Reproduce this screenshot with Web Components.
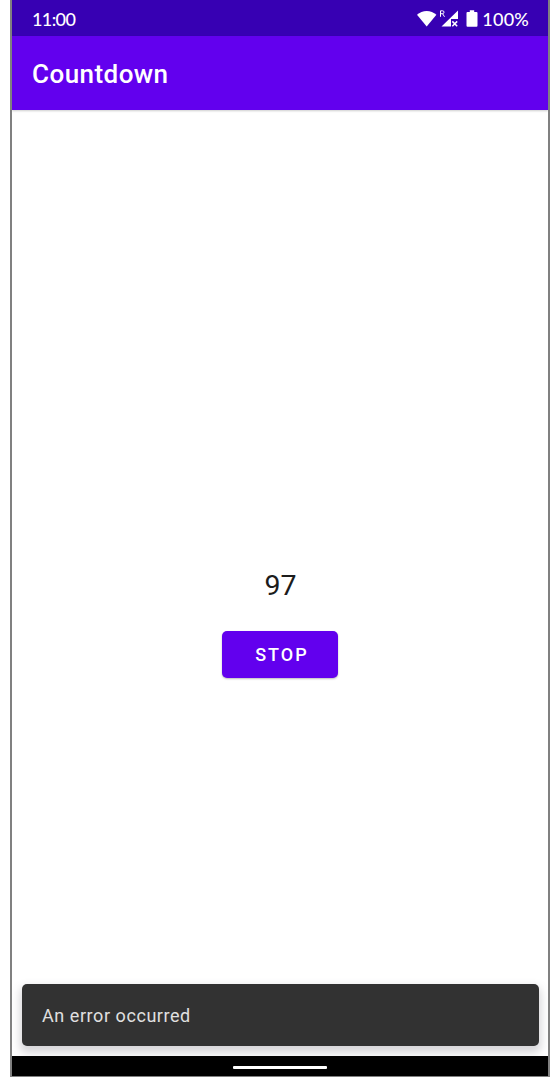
<!DOCTYPE html>
<html lang="en">
<head>
<meta charset="utf-8">
<title>Countdown</title>
<style>
html,body{margin:0;height:100%;background:#fff;overflow:hidden}
</style>
</head>
<body>
<countdown-screen></countdown-screen>
<script>
const define = (name, html) => customElements.define(name, class extends HTMLElement {
  constructor() {
    super();
    const t = document.createElement('template');
    t.innerHTML = html;
    this.attachShadow({ mode: 'open' }).append(t.content.cloneNode(true));
  }
});

define('status-bar', `
<style>
:host{display:flex;box-sizing:border-box;height:36px;padding:1px 19px 0 20px;align-items:center;justify-content:space-between;background:#3700b3;color:#fff;font:500 18px/22px Lato,"Open Sans",sans-serif}
.right{display:flex;align-items:center}
svg{display:block;margin-right:1px}
.time{letter-spacing:-.6px}
.pct{letter-spacing:.2px}
</style>
<span class="time">11:00</span>
<div class="right">
<svg width="64" height="22" viewBox="0 0 64 22" fill="#fff">
<path d="M0 6.8C5.3 1.6 14.1 1.6 19.4 6.8L9.7 18.4Z"/>
<path d="M41 2.5V11H34V18.5H24.5Z"/>
<path d="M35.3 13.4L40.2 18.3M40.2 13.4L35.3 18.3" stroke="#fff" stroke-width="1.5"/>
<path d="M23.5 8.8V2.8H25.6Q27 2.8 27 4.2T25.6 5.7H23.5M25.6 5.7L27.5 8.8" fill="none" stroke="#fff" stroke-width="1"/>
<path d="M52.8 2.2H57.2V4H59.5Q60.5 4 60.5 5V17.6Q60.5 18.8 59.5 18.8H50.5Q49.5 18.8 49.5 17.6V5Q49.5 4 50.5 4H52.8Z"/>
</svg>
<span class="pct">100%</span>
</div>`);

define('app-bar', `
<style>
:host{display:flex;box-sizing:border-box;height:74px;padding:1px 20px 0;align-items:center;background:#6200ee;color:#fff;font:500 26px/30px Roboto,sans-serif;letter-spacing:.45px;box-shadow:0 1px 2px #0003}
</style><slot></slot>`);

define('contained-button', `
<style>
:host{display:block}
button{display:block;width:116px;height:47px;margin:0;padding:1px 0 0 3px;border:0;border-radius:5px;background:#6200ee;color:#fff;font:500 18px/22px Roboto,sans-serif;letter-spacing:2px;box-shadow:0 1px 2px #0004}
</style><button type="button"><slot></slot></button>`);

define('snack-bar', `
<style>
:host{display:flex;box-sizing:border-box;height:62px;margin:0 9px 10px 10px;padding:2px 20px 0;align-items:center;border-radius:5px;background:#323232;color:#e0e0e0;font:400 18px/22px Roboto,sans-serif;letter-spacing:.56px;box-shadow:0 5px 8px 2px #605a6840}
</style><slot></slot>`);

define('nav-bar', `
<style>
:host{display:flex;height:20px;position:relative;background:#000;align-items:center;justify-content:center}
i{display:block;width:94px;height:3px;margin-top:3px;border-radius:1px;background:#fff}
</style><i></i>`);

define('countdown-screen', `
<style>
:host{display:flex;flex-direction:column;box-sizing:border-box;width:540px;height:1077px;margin-left:10px;border:solid #808080;border-width:0 2px 1px;background:#fff;overflow:hidden}
main{flex:1;display:flex;flex-direction:column;align-items:center;padding-left:.8px}
.count{margin-top:459px;height:34px;font:400 28.5px/34px Roboto,sans-serif;color:#1c1c1c}
contained-button{margin-top:28px}
</style>
<status-bar></status-bar>
<app-bar>Countdown</app-bar>
<main>
<div class="count">97</div>
<contained-button>STOP</contained-button>
</main>
<snack-bar>An error occurred</snack-bar>
<nav-bar></nav-bar>`);
</script>
</body>
</html>
